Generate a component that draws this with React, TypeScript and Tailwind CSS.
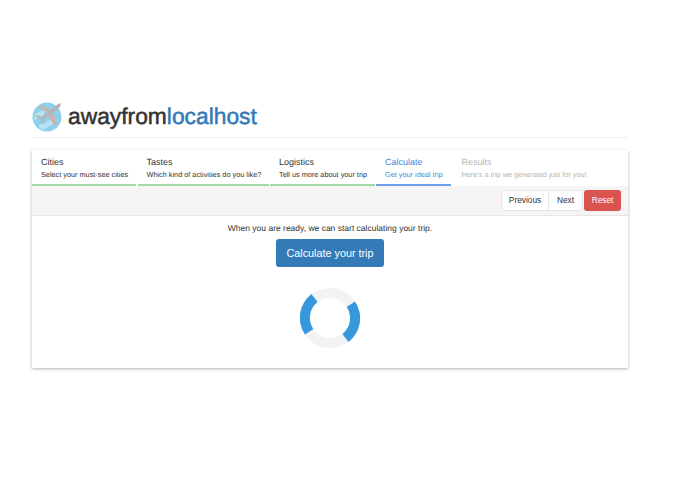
const steps = [
  { title: "Cities", desc: "Select your must-see cities", width: "w-[104px]", border: "border-[#a3d9a5]", color: "text-[#333333]" },
  { title: "Tastes", desc: "Which kind of activities do you like?", width: "w-[131px]", border: "border-[#a3d9a5]", color: "text-[#333333]" },
  { title: "Logistics", desc: "Tell us more about your trip", width: "w-[104.5px]", border: "border-[#a3d9a5]", color: "text-[#333333]" },
  { title: "Calculate", desc: "Get your ideal trip", width: "w-[75px]", border: "border-[#6f9fe8]", color: "text-[#4a86e0]" },
  { title: "Results", desc: "Here's a trip we generated just for you!", width: "flex-1", border: "border-transparent", color: "text-[#b5b5b5]" },
];

const Logo = () => (
  <svg width="30" height="30" viewBox="0 0 30 30" className="shrink-0">
    <circle cx="15" cy="15" r="14.5" fill="#8fd0ea" />
    <path d="M3 12 L14 7 L11 14 L2 18 Z" fill="#b9e3f3" />
    <path d="M6 24 L20 17 L24 20 L11 28 Z" fill="#b9e3f3" />
    <path d="M29 1 L26 2 L9 16 L11 18 L28 5 Z" fill="#b4b4b6" />
    <path d="M19 7 L8 3 L6 5 L15 11 Z" fill="#bdb9b7" />
    <path d="M21 11 L25 22 L23 24 L16 14 Z" fill="#cbb2ae" />
    <path d="M10 15 L4 13 L3 14 L9 17 L12 22 L13 21 L11 16 Z" fill="#b4b4b6" />
  </svg>
);

const Spinner = () => (
  <svg width="60" height="60" viewBox="0 0 60 60" className="mt-[21px]">
    <circle cx="30" cy="30" r="25" fill="none" stroke="#f3f3f3" strokeWidth="10" />
    <path d="M11.4 6.1 A 30 30 0 0 0 5 46.5 L 13.3 41 A 20 20 0 0 1 17.6 14.1 Z" fill="#3498db" />
    <path d="M48.6 53.9 A 30 30 0 0 0 55 13.5 L 46.7 19 A 20 20 0 0 1 42.4 45.9 Z" fill="#3498db" />
  </svg>
);

export default function App() {
  return (
    <div className="min-h-[494px] bg-white pt-[101px] pl-[32px] font-['Liberation_Sans',sans-serif] text-[#333333] [text-rendering:geometricPrecision]">
      <div className="w-[596px]">
        {/* Header */}
        <div className="flex h-[36px] items-start">
          <div className="mt-px">
            <Logo />
          </div>
          <h1 className="ml-[6px] text-[22.8px] leading-[30px] font-medium [-webkit-text-stroke:0.5px_currentColor]">
            awayfrom<span className="text-[#337ab7]">localhost</span>
          </h1>
        </div>
        <div className="h-px bg-[#f0f0f0]" />

        {/* Wizard card */}
        <div className="mt-[12px] h-[218px] bg-white shadow-[0_1px_3px_rgba(0,0,0,0.3)]">
          <div className="flex h-[36px] gap-[1.5px]">
            {steps.map((step) => (
              <div key={step.title} className={`${step.width} border-b-2 ${step.border} pl-[9px] pt-[6px]`}>
                <div className={`text-[9px] leading-[12px] ${step.color}`}>{step.title}</div>
                <div className={`mt-[1px] text-[7.3px] leading-[12px] whitespace-nowrap ${step.color}`}>{step.desc}</div>
              </div>
            ))}
          </div>

          {/* Toolbar */}
          <div className="flex h-[30px] items-center justify-end border-b border-[#e7e7e7] bg-[#f5f5f5] pr-[7px]">
            <div className="flex h-[21px] text-[8.3px] text-[#333333]">
              <button className="w-[48px] rounded-l-[3px] border border-[#e6e6e6] bg-white">Previous</button>
              <button className="-ml-px w-[35px] rounded-r-[3px] border border-[#e6e6e6] bg-white">Next</button>
              <button className="ml-[1px] w-[37px] rounded-[3px] bg-[#d9534f] text-white">Reset</button>
            </div>
          </div>

          {/* Body */}
          <div className="flex flex-col items-center pt-[6px]">
            <p className="text-[8.5px] leading-[12px]">When you are ready, we can start calculating your trip.</p>
            <button className="mt-[5px] h-[28px] w-[108px] rounded-[3px] bg-[#337ab7] text-[10.8px] text-white">Calculate your trip</button>
            <Spinner />
          </div>
        </div>
      </div>
    </div>
  );
}
